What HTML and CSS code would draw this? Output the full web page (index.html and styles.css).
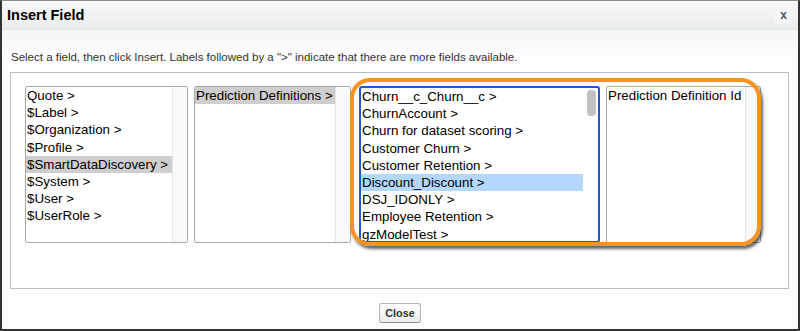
FILE: index.html
```html
<!DOCTYPE html>
<html lang="en">
<head>
    <meta charset="UTF-8">
    <title>Insert Field</title>
    <link rel="stylesheet" href="styles.css">
</head>
<body>
    <div class="dialog">
        <div class="dialog-header">
            <h2>Insert Field</h2>
            <button class="close-x">x</button>
        </div>
        <div class="dialog-body">
            <p class="hint">Select a field, then click Insert. Labels followed by a "&gt;" indicate that there are more fields available.</p>
            <div class="field-box">
                <div class="list list-1">
                    <ul>
                        <li>Quote &gt;</li>
                        <li>$Label &gt;</li>
                        <li>$Organization &gt;</li>
                        <li>$Profile &gt;</li>
                        <li class="sel">$SmartDataDiscovery &gt;</li>
                        <li>$System &gt;</li>
                        <li>$User &gt;</li>
                        <li>$UserRole &gt;</li>
                    </ul>
                    <div class="gutter"></div>
                </div>
                <div class="list list-2">
                    <ul>
                        <li class="sel">Prediction Definitions &gt;</li>
                    </ul>
                    <div class="gutter"></div>
                </div>
                <div class="list list-3">
                    <ul>
                        <li>Churn__c_Churn__c &gt;</li>
                        <li>ChurnAccount &gt;</li>
                        <li>Churn for dataset scoring &gt;</li>
                        <li>Customer Churn &gt;</li>
                        <li>Customer Retention &gt;</li>
                        <li class="active">Discount_Discount &gt;</li>
                        <li>DSJ_IDONLY &gt;</li>
                        <li>Employee Retention &gt;</li>
                        <li>gzModelTest &gt;</li>
                    </ul>
                    <div class="scrollbar"><div class="thumb"></div></div>
                </div>
                <div class="list list-4">
                    <ul>
                        <li>Prediction Definition Id</li>
                    </ul>
                    <div class="gutter"></div>
                </div>
                <div class="callout"></div>
            </div>
        </div>
        <div class="dialog-footer">
            <button class="btn">Close</button>
        </div>
    </div>
</body>
</html>
```

FILE: styles.css
```css
* {
    box-sizing: border-box;
}
body {
    margin: 0;
    font-family: "Liberation Sans", Arial, sans-serif;
    background-color: #fff;
}
.dialog {
    width: 800px;
    height: 331px;
    border: 2px solid #333;
    border-top: 1px solid #8a8a8a;
    background-color: #fdfdfd;
    display: flex;
    flex-direction: column;
}
.dialog-header {
    height: 29px;
    display: flex;
    align-items: center;
    justify-content: space-between;
    padding: 0 6px 0 5px;
    background: linear-gradient(#f7f8f9, #e9ecee);
    border-bottom: 1px solid #dfe3e6;
}
.dialog-header h2 {
    margin: 0;
    font-size: 14.5px;
    font-weight: bold;
    color: #000;
}
.close-x {
    width: 17px;
    height: 17px;
    padding: 0;
    border: none;
    border-radius: 2px;
    background-color: #f3f5f6;
    color: #555;
    font-family: "Liberation Sans", Arial, sans-serif;
    font-size: 12px;
    font-weight: bold;
    line-height: 15px;
}
.dialog-body {
    background: linear-gradient(#f6f6f6, #fdfdfd 30px);
    padding: 20px 9px 0 8px;
}
.hint {
    margin: 0 0 8px 1px;
    font-size: 11.5px;
    line-height: 14px;
    color: #333;
}
.field-box {
    position: relative;
    height: 217px;
    border: 1px solid #bdbdbd;
    background-color: #fff;
    padding: 13px 0 0 14px;
    display: flex;
    align-items: flex-start;
    gap: 6px;
}
.list {
    height: 157px;
    border: 1px solid #a9a9a9;
    border-radius: 2px;
    background-color: #fff;
    display: flex;
    overflow: hidden;
}
.list ul {
    list-style: none;
    margin: 0;
    padding: 0;
    flex: 1;
    min-width: 0;
}
.list li {
    font-size: 13.33px;
    line-height: 17.2px;
    padding-left: 1px;
    white-space: nowrap;
    color: #000;
}
.list li.sel {
    background-color: #cecece;
}
.list li.active {
    background-color: #b3d7fe;
}
.gutter {
    width: 15px;
    background-color: #f9f9f9;
    border-left: 1px solid #e6e6e6;
}
.list-1 {
    width: 163px;
}
.list-2 {
    width: 157px;
}
.list-3 {
    width: 241px;
    margin-left: 2px;
    border: 2px solid #1f57d4;
    border-radius: 3px;
}
.list-4 {
    width: 155px;
}
.scrollbar {
    width: 15px;
    padding: 2px 2px 0 4px;
}
.thumb {
    height: 26px;
    border-radius: 4px;
    background-color: #c1c1c1;
}
.callout {
    position: absolute;
    left: 339px;
    top: 5px;
    width: 411px;
    height: 168px;
    border: 4px solid #f7931e;
    border-radius: 20px;
    box-shadow: 2px 3px 3px rgba(0, 0, 0, 0.6);
    pointer-events: none;
}
.dialog-footer {
    display: flex;
    justify-content: center;
    padding-top: 14px;
}
.btn {
    width: 42px;
    height: 20px;
    padding: 0;
    border: 1px solid #b5b5b5;
    border-bottom-color: #8f8f8f;
    border-radius: 3px;
    background: linear-gradient(#ffffff, #ededed);
    font-family: "Liberation Sans", Arial, sans-serif;
    font-size: 10.8px;
    font-weight: bold;
    color: #333;
}
```
